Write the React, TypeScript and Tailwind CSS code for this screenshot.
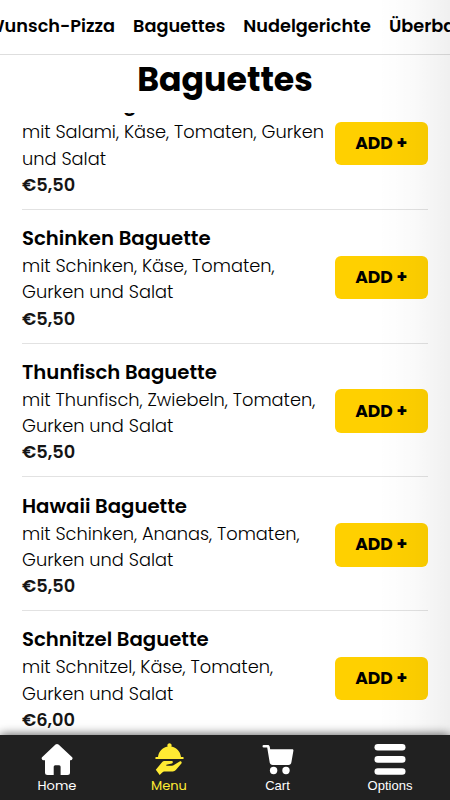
import type { ReactNode } from "react";

type Item = { name: string; description: ReactNode; price: string };

const categories = ["Wunsch-Pizza", "Baguettes", "Nudelgerichte", "Überbackenes"];

const items: Item[] = [
  { name: "Salami Baguette", description: <>mit Salami, Käse, Tomaten, Gurken<br />und Salat</>, price: "€5,50" },
  { name: "Schinken Baguette", description: <>mit Schinken, Käse, Tomaten,<br />Gurken und Salat</>, price: "€5,50" },
  { name: "Thunfisch Baguette", description: <>mit Thunfisch, Zwiebeln, Tomaten,<br />Gurken und Salat</>, price: "€5,50" },
  { name: "Hawaii Baguette", description: <>mit Schinken, Ananas, Tomaten,<br />Gurken und Salat</>, price: "€5,50" },
  { name: "Schnitzel Baguette", description: <>mit Schnitzel, Käse, Tomaten,<br />Gurken und Salat</>, price: "€6,00" },
];

const HomeIcon = () => (
  <svg viewBox="0 0 32 32" className="h-8 w-8" fill="currentColor">
    <path d="M14.500 1.600a2.200 2.200 0 0 1 3 0L30.900 14a1.900 1.900 0 0 1-1.300 3.300H29V29.500a2.500 2.500 0 0 1-2.500 2.500H19.600v-8.300a1.500 1.500 0 0 0-1.500-1.500h-3.900a1.500 1.500 0 0 0-1.500 1.500V32H6.500A2.500 2.500 0 0 1 4 29.500V17.300H2.600A1.900 1.900 0 0 1 1.300 14Z" />
  </svg>
);

const ServeIcon = () => (
  <svg viewBox="0 0 32 32" className="h-8 w-8" fill="currentColor">
    <path d="M14.700 3.500a2.100 2.100 0 1 1 3.600 0C23.500 4.400 27.300 8.500 28 13.900H30a.6.6 0 0 1 .6.600v1a.6.6 0 0 1-.6.600H3a.6.6 0 0 1-.6-.600v-1a.6.6 0 0 1 .6-.600H5C5.700 8.500 9.500 4.400 14.700 3.500Z" />
    <path d="M2.800 26.800 8.800 19.500c.9-1 1.900-1.400 3.200-1.400h6.600c1.500 0 1.700 2 .3 2.300l-5.400 1.300c-.5.2-.4 1 .2 1h5c1 0 1.800-.3 2.600-.9l5.300-3.300c1.400-.8 2.700.7 1.800 1.900l-5.600 6.600c-.8.9-1.800 1.400-3 1.400H12c-1.300 0-2.200.4-3 1.300L6.700 32Z" />
  </svg>
);

const CartIcon = () => (
  <svg viewBox="0 0 32 32" className="h-8 w-8" fill="currentColor">
    <path d="M1.800 1.900h4c1 0 1.700.6 1.900 1.500l.5 2.800h22c.9 0 1.400.6 1.200 1.500l-2 11.500c-.3 1.800-1.300 2.700-3 2.700H10.700c-1.700 0-2.700-.9-3-2.500L5.200 4.500H1.800a1.300 1.300 0 0 1 0-2.600Z" />
    <circle cx="11.600" cy="27.500" r="3.700" />
    <circle cx="24" cy="27.500" r="3.700" />
  </svg>
);

const MenuIcon = () => (
  <svg viewBox="0 0 32 32" className="h-8 w-8" fill="currentColor">
    <rect x="0.500" y="1" width="31" height="6.600" rx="3.300" />
    <rect x="0.500" y="13.100" width="31" height="6.600" rx="3.300" />
    <rect x="0.500" y="25.200" width="31" height="6.600" rx="3.300" />
  </svg>
);

const App = () => {
  return (
    <div className="relative flex h-[800px] w-[450px] flex-col overflow-hidden bg-white font-[Poppins,Inter,sans-serif] text-black">
      <header className="h-[55px] shrink-0 overflow-hidden border-b border-[#dedede]">
        <nav className="-ml-[13.500px] flex h-[53px] items-center gap-[18px] text-[17.700px] font-semibold whitespace-nowrap">
          {categories.map((category) => (
            <a key={category}>{category}</a>
          ))}
        </nav>
      </header>

      <h1 className="h-[58px] shrink-0 pt-[2px] text-center text-[33.200px] leading-[46px] font-bold">Baguettes</h1>

      <main className="min-h-0 flex-1 overflow-hidden px-[22px]">
        <div className="-mt-[37px]">
          {items.map((item) => (
            <div key={item.name} className="flex h-[133.750px] items-center justify-between border-b border-[#e2e2e2] pt-[2.500px]">
              <div className="whitespace-nowrap">
                <h2 className="text-[19.700px] leading-[30px] font-semibold">{item.name}</h2>
                <p className="text-[17.800px] leading-[26.200px] font-light">{item.description}</p>
                <p className="text-[17.800px] leading-[26px] font-semibold text-[#151515]">{item.price}</p>
              </div>
              <button className="h-[43.500px] w-[93.500px] rounded-md bg-[#ffd000] pt-px text-[17.200px] font-bold">ADD +</button>
            </div>
          ))}
        </div>
      </main>

      <footer className="z-10 flex h-[65px] shrink-0 bg-[#212121] text-[13px] text-white shadow-[0_0_10px_rgba(0,0,0,0.7)]">
        <a className="flex w-[114px] flex-col items-center gap-px pt-[8px]"><HomeIcon /><span>Home</span></a>
        <a className="flex w-[110px] flex-col items-center gap-px pt-[8px] text-[#ffeb33]"><ServeIcon /><span>Menu</span></a>
        <a className="flex w-[107px] flex-col items-center gap-px pt-[8px]"><CartIcon /><span className="font-['Liberation_Sans',sans-serif]">Cart</span></a>
        <a className="flex w-[118px] flex-col items-center gap-px pt-[8px]"><MenuIcon /><span className="font-['Liberation_Sans',sans-serif]">Options</span></a>
      </footer>

      <div className="pointer-events-none absolute inset-y-0 right-0 w-[72px] bg-linear-to-r from-transparent via-black/2 to-black/6" />
    </div>
  );
};

export default App;
